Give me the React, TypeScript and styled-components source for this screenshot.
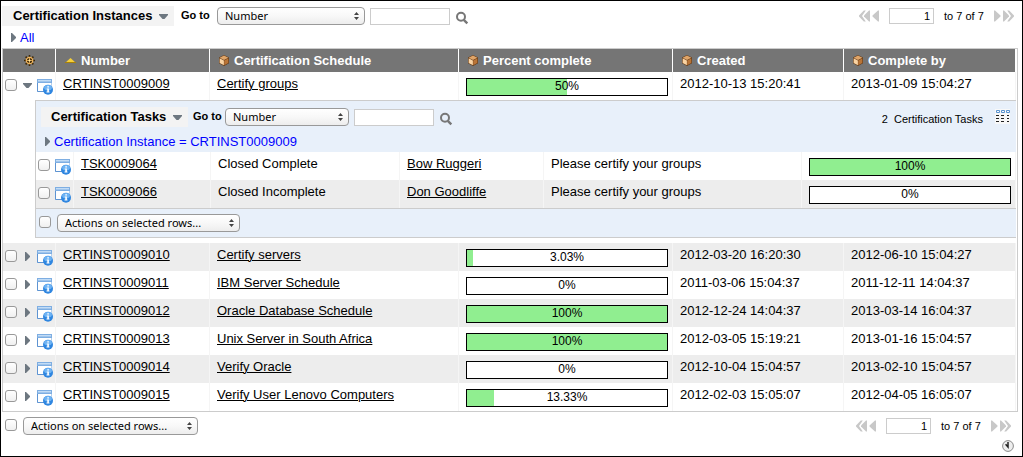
import React from "react";
import styled, { createGlobalStyle } from "styled-components";

const GlobalStyle = createGlobalStyle`
  * { box-sizing: border-box; }
  body { margin: 0; background: #fff; }
`;

const Frame = styled.main`
  min-height: 100vh;
  border: 1px solid #000;
  background: #fff;
  color: #000;
  font-family: "Liberation Sans", Arial, sans-serif;
  font-size: 13px;
  line-height: 15px;
  padding: 0 4px 0 1px;
`;

const Toolbar = styled.header<{ $nested?: boolean }>`
  display: flex;
  align-items: flex-start;
  padding: ${(p) => (p.$nested ? "6px 6px 0 5px" : "5px 4px 0 0")};

  > span {
    margin-top: 1px;
  }
`;

const Title = styled.h1<{ $nested?: boolean }>`
  display: flex;
  align-items: center;
  justify-content: space-between;
  width: ${(p) => (p.$nested ? 147 : 172)}px;
  height: 20px;
  margin: 0;
  padding: 0 6px 0 ${(p) => (p.$nested ? 10 : 11)}px;
  background: #f3f3f3;
  font-size: 13px;
  line-height: 20px;
  white-space: nowrap;
`;

const IconButton = styled.button`
  display: flex;
  flex: none;
  margin: 0;
  padding: 0;
  border: 0;
  background: none;
  cursor: pointer;
`;

const GoToLabel = styled.label<{ $nested?: boolean }>`
  width: 31px;
  margin: ${(p) => (p.$nested ? "1px 1px 0 5px" : "1px 5px 0 7px")};
  font-size: 11px;
  font-weight: bold;
  line-height: 16px;
  white-space: nowrap;
`;

const SelectWrap = styled.span<{ $width: number }>`
  position: relative;
  display: block;
  flex: none;
  width: ${(p) => p.$width}px;
  height: 18px;

  svg {
    position: absolute;
    top: 5px;
    right: 6px;
    pointer-events: none;
  }
`;

const NativeSelect = styled.select`
  appearance: none;
  display: block;
  width: 100%;
  height: 18px;
  margin: 0;
  padding: 0 16px 0 7px;
  border: 1px solid #999;
  border-radius: 4px;
  background: linear-gradient(#fff, #f8f8f8 50%, #ededed);
  color: #000;
  font: 11px/16px "Noto Sans", sans-serif;
`;

const TextInput = styled.input`
  width: 80px;
  height: 17px;
  margin: 2px 5px 0;
  padding: 0 3px;
  border: 1px solid #ccc;
  background: #fff;
  font: 11px/15px "Liberation Sans", Arial, sans-serif;
`;

const SearchButton = styled(IconButton)`
  margin-top: 5px;
`;

const ColumnsButton = styled(IconButton)`
  margin-top: 2px;
`;

const PagerBar = styled.div`
  display: flex;
  align-items: center;
  height: 18px;
  margin-top: 1px;
  margin-left: auto;
  font-size: 11px;
  white-space: nowrap;
`;

const PageInput = styled.input`
  width: 45px;
  height: 16px;
  margin: 0 10px;
  padding: 0 3px;
  border: 1px solid #ccc;
  background: #fff;
  color: #000;
  font: 11px/14px "Liberation Sans", Arial, sans-serif;
  text-align: right;
`;

const PageCount = styled.span`
  width: 42px;
  margin-right: 8px;
`;

const TaskCount = styled.span`
  display: flex;
  gap: 6px;
  margin: 3px 12px 0 auto;
  padding-top: 2px;
  font-size: 11px;
`;

const Breadcrumb = styled.nav<{ $nested?: boolean }>`
  display: flex;
  align-items: center;
  gap: 4px;
  height: ${(p) => (p.$nested ? 25 : 22)}px;
  padding: ${(p) => (p.$nested ? "3px 0 0 9px" : "0 0 0 9px")};

  a {
    color: #00f;
    text-decoration: none;
  }
`;

const TableFrame = styled.section`
  padding-right: 1px;
  border: 1px solid #ccc;
`;

const DataTable = styled.table`
  width: 100%;
  table-layout: fixed;
  border-collapse: separate;
  border-spacing: 0;
`;

const HeadCell = styled.th<{ $width?: number }>`
  width: ${(p) => (p.$width ? `${p.$width}px` : "auto")};
  height: 23px;
  padding: 0 0 0 9px;
  border-right: 1px solid #fff;
  background: #757575;
  color: #fff;
  text-align: left;
`;

const HeadContent = styled.span<{ $center?: boolean }>`
  display: flex;
  align-items: center;
  justify-content: ${(p) => (p.$center ? "center" : "flex-start")};
  gap: 5px;
  padding-right: ${(p) => (p.$center ? 9 : 0)}px;
  white-space: nowrap;
`;

const Row = styled.tr<{ $shaded: boolean }>`
  background: ${(p) => (p.$shaded ? "#ededed" : "#fff")};
`;

const Cell = styled.td<{ $width?: number }>`
  width: ${(p) => (p.$width ? `${p.$width}px` : "auto")};
  height: 28px;
  padding: 4px 0 0 7px;
  border-right: 1px solid #f5f5f5;
  vertical-align: top;
  white-space: nowrap;
`;

const BarCell = styled(Cell)`
  padding: 6px 4px 0 7px;
`;

const ControlCell = styled(Cell)`
  padding: 7px 0 0 2px;
`;

const Controls = styled.div`
  display: flex;
  align-items: flex-start;
`;

const Checkbox = styled.input`
  appearance: none;
  flex: none;
  width: 12px;
  height: 12px;
  margin: 0;
  border: 1px solid #999;
  border-radius: 3px;
  background: linear-gradient(#fff, #f0f0f0);
`;

const ExpandButton = styled(IconButton)`
  justify-content: center;
  width: 20px;
  height: 12px;
  align-items: center;
`;

const TaskIconButton = styled(IconButton)`
  margin-left: 5px;
`;

const RecordLink = styled.a`
  color: #000;
  text-decoration: underline;
  text-decoration-thickness: 1px;
  text-underline-offset: 1px;
`;

const Bar = styled.div`
  position: relative;
  height: 18px;
  border: 1px solid #000;
  background: #fff;
  font-size: 12px;
  line-height: 14px;
  text-align: center;
`;

const BarFill = styled.div`
  position: absolute;
  top: 0;
  bottom: 0;
  left: 0;
  background: #90ee90;
`;

const BarText = styled.span`
  position: relative;
`;

const NestedCell = styled.td`
  padding: 0 0 5px 32px;
`;

const NestedPanel = styled.section`
  border: 1px solid #ccc;
  border-right: 0;
  background: #e8f0fa;
`;

const Footer = styled.footer<{ $nested?: boolean }>`
  display: flex;
  align-items: flex-start;
  height: ${(p) => (p.$nested ? 29 : 28)}px;
  padding: ${(p) => (p.$nested ? "5px 0 0 3px" : "5px 7px 0 3px")};
  border-top: ${(p) => (p.$nested ? "1px solid #ccc" : "0")};
  gap: 6px;

  > input {
    margin-top: 2px;
  }

  > div {
    margin-top: 0;
  }
`;

const Status = styled.div`
  display: flex;
  justify-content: flex-end;
  padding: 0 4px 0 0;
`;

function Arrow({ down }: { down?: boolean }) {
  return down ? (
    <svg width="9" height="5" viewBox="0 0 9 5" aria-hidden="true">
      <path d="M0 0H9V1L5.5 5H3.5L0 1Z" fill="#6d7780" />
    </svg>
  ) : (
    <svg width="5" height="9" viewBox="0 0 5 9" aria-hidden="true">
      <path d="M0 0H1L5 4V5L1 9H0Z" fill="#6d7780" />
    </svg>
  );
}

function SearchIcon() {
  return (
    <svg width="14" height="14" viewBox="0 0 14 14" aria-hidden="true">
      <circle cx="6" cy="5.7" r="4" fill="none" stroke="#777" strokeWidth="2" />
      <path d="M8.8 8.8L12.3 12.3" stroke="#777" strokeWidth="2.4" />
    </svg>
  );
}

function StepperIcon() {
  return (
    <svg width="5" height="8" viewBox="0 0 5 8" aria-hidden="true">
      <path d="M2.5 0L5 3H0ZM0 5H5L2.5 8Z" fill="#444" />
    </svg>
  );
}

function PagerIcon({ forward }: { forward?: boolean }) {
  return (
    <svg width="20" height="12" viewBox="0 0 20 12" aria-hidden="true">
      <g transform={forward ? "translate(20 0) scale(-1 1)" : undefined} fill="#c8c8c8">
        <path d="M4.8 0.5H6.8L3 6L6.8 11.5H4.8L0 6.5V5.5Z" />
        <path d="M10 0.5H11V11.5H10L5 6.5V5.5Z" />
        <path d="M19 0.5H20V11.5H19L13.5 6.5V5.5Z" />
      </g>
    </svg>
  );
}

function CubeIcon() {
  return (
    <svg width="10" height="11" viewBox="0 0 10 11" aria-hidden="true">
      <path d="M5 0L10 2.5V8.3L5 11L0 8.3V2.5Z" fill="#5e3716" />
      <path d="M5 0.6L9.4 2.8L5 5L0.6 2.8Z" fill="#dfa569" />
      <path d="M0.6 3.2L4.9 5.4V10.3L0.6 8Z" fill="#fad3a2" />
      <path d="M9.4 3.2L5.2 5.4V10.3L9.4 8Z" fill="#b87437" />
    </svg>
  );
}

function SortIcon() {
  return (
    <svg width="11" height="5" viewBox="0 0 11 5" aria-hidden="true">
      <path d="M5.5 0L11 5H0Z" fill="#f5cf3a" />
      <path d="M0 4.5H11" stroke="#a98208" />
    </svg>
  );
}

function GearIcon() {
  return (
    <svg width="11" height="11" viewBox="0 0 11 11" aria-hidden="true">
      <path
        d="M5.5 0V11M0 5.5H11M1.6 1.6L9.4 9.4M9.4 1.6L1.6 9.4"
        stroke="#3c2604"
        strokeWidth="1.6"
      />
      <circle cx="5.5" cy="5.5" r="3.2" fill="#3c2604" stroke="#efb560" strokeWidth="1.2" />
      <path d="M5.5 2.5V8.5M2.5 5.5H8.5" stroke="#efb560" strokeWidth="0.8" />
      <circle cx="5.5" cy="5.5" r="1" fill="#fff0a8" />
    </svg>
  );
}

function FormIcon() {
  return (
    <svg width="16" height="16" viewBox="0 0 16 16" aria-hidden="true">
      <path d="M0.5 0.5H14.5V12.5H0.5Z" fill="#fff" stroke="#b5cfec" />
      <path d="M0 0H15V4H0Z" fill="#7eaee2" />
      <path d="M1 1H14V2.5H1Z" fill="#c2dcf6" />
      <path d="M0.5 4V12.5H7" fill="none" stroke="#5e94d2" />
      <circle cx="11" cy="10.7" r="5" fill="#2f86e0" />
      <ellipse cx="11" cy="8.8" rx="3.9" ry="2.7" fill="#6fb4f4" />
      <path d="M10.3 7.3H11.9V8.6H10.3ZM9.7 9.5H11.9V12.6H12.5V13.4H9.5V12.6H10.3V10.3H9.7Z" fill="#fff" />
    </svg>
  );
}

function ColumnsIcon() {
  return (
    <svg width="15" height="15" viewBox="0 0 15 15" aria-hidden="true">
      <rect width="15" height="15" fill="#f8f8f8" />
      <path d="M1.5 1.5H4.5V3.5H1.5ZM6.5 1.5H9.5V3.5H6.5ZM11.5 1.5H14.5V3.5H11.5Z" fill="#fff" stroke="#5a93cf" />
      <path
        d="M1 6.5H4M6 6.5H9M12 6.5H14M1 9.5H4M6 9.5H9M12 9.5H14M1 12.5H4M6 12.5H9M12 12.5H14"
        stroke="#222"
      />
    </svg>
  );
}

function ClockIcon() {
  return (
    <svg width="12" height="12" viewBox="0 0 12 12" aria-hidden="true">
      <circle cx="6" cy="6" r="5.4" fill="#eee" stroke="#8a8a8a" />
      <path d="M6 2V7L3.6 4.2" fill="none" stroke="#222" strokeWidth="1.5" />
    </svg>
  );
}

function Picker({ id, label, text, width }: { id: string; label?: string; text: string; width: number }) {
  return (
    <SelectWrap $width={width}>
      <NativeSelect id={id} aria-label={label}>
        <option>{text}</option>
      </NativeSelect>
      <StepperIcon />
    </SelectWrap>
  );
}

function ListToolbar({
  id,
  title,
  selectWidth,
  nested,
  children,
}: {
  id: string;
  title: string;
  selectWidth: number;
  nested?: boolean;
  children: React.ReactNode;
}) {
  return (
    <Toolbar $nested={nested}>
      <Title as={nested ? "h2" : "h1"} $nested={nested}>
        {title}
        <IconButton aria-label={`${title} menu`}>
          <Arrow down />
        </IconButton>
      </Title>
      <GoToLabel htmlFor={id} $nested={nested}>
        Go to
      </GoToLabel>
      <Picker id={id} text="Number" width={selectWidth} />
      <TextInput type="text" aria-label="Search text" />
      <SearchButton aria-label="Search">
        <SearchIcon />
      </SearchButton>
      {children}
    </Toolbar>
  );
}

function Pager() {
  return (
    <PagerBar>
      <IconButton aria-label="Previous pages">
        <PagerIcon />
      </IconButton>
      <PageInput type="text" defaultValue="1" aria-label="Row number" />
      <PageCount>to 7 of 7</PageCount>
      <IconButton aria-label="Next pages">
        <PagerIcon forward />
      </IconButton>
    </PagerBar>
  );
}

function Progress({ value }: { value: number }) {
  return (
    <Bar role="progressbar" aria-valuenow={value} aria-valuemin={0} aria-valuemax={100}>
      <BarFill style={{ width: `${value}%` }} />
      <BarText>{value}%</BarText>
    </Bar>
  );
}

const instances = [
  { number: "CRTINST0009009", schedule: "Certify groups", percent: 50, created: "2012-10-13 15:20:41", due: "2013-01-09 15:04:27" },
  { number: "CRTINST0009010", schedule: "Certify servers", percent: 3.03, created: "2012-03-20 16:20:30", due: "2012-06-10 15:04:27" },
  { number: "CRTINST0009011", schedule: "IBM Server Schedule", percent: 0, created: "2011-03-06 15:04:37", due: "2011-12-11 14:04:37" },
  { number: "CRTINST0009012", schedule: "Oracle Database Schedule", percent: 100, created: "2012-12-24 14:04:37", due: "2013-03-14 16:04:37" },
  { number: "CRTINST0009013", schedule: "Unix Server in South Africa", percent: 100, created: "2012-03-05 15:19:21", due: "2013-01-16 15:04:57" },
  { number: "CRTINST0009014", schedule: "Verify Oracle", percent: 0, created: "2012-10-04 15:04:57", due: "2013-02-10 15:04:57" },
  { number: "CRTINST0009015", schedule: "Verify User Lenovo Computers", percent: 13.33, created: "2012-02-03 15:05:07", due: "2012-04-05 16:05:07" },
];

const tasks = [
  { number: "TSK0009064", state: "Closed Complete", owner: "Bow Ruggeri", percent: 100 },
  { number: "TSK0009066", state: "Closed Incomplete", owner: "Don Goodliffe", percent: 0 },
];

const columns = [
  { label: "Certification Schedule", width: 249 },
  { label: "Percent complete", width: 214 },
  { label: "Created", width: 171 },
  { label: "Complete by" },
];

function TaskPanel() {
  return (
    <NestedPanel>
      <ListToolbar id="goto-task" title="Certification Tasks" selectWidth={124} nested>
        <TaskCount as="div">
          <span>2</span>
          <span>Certification Tasks</span>
        </TaskCount>
        <ColumnsButton aria-label="Choose columns">
          <ColumnsIcon />
        </ColumnsButton>
      </ListToolbar>
      <Breadcrumb $nested aria-label="Task filter">
        <Arrow />
        <a href="#filter">Certification Instance = CRTINST0009009</a>
      </Breadcrumb>
      <DataTable>
        <tbody>
          {tasks.map((task, i) => (
            <Row key={task.number} $shaded={i % 2 === 1}>
              <ControlCell $width={38}>
                <Controls>
                  <Checkbox type="checkbox" aria-label={`Select ${task.number}`} />
                  <TaskIconButton aria-label={`About ${task.number}`}>
                    <FormIcon />
                  </TaskIconButton>
                </Controls>
              </ControlCell>
              <Cell $width={137}>
                <RecordLink href={`#${task.number}`}>{task.number}</RecordLink>
              </Cell>
              <Cell $width={189}>{task.state}</Cell>
              <Cell $width={144}>
                <RecordLink href="#owner">{task.owner}</RecordLink>
              </Cell>
              <Cell>Please certify your groups</Cell>
              <BarCell $width={214}>
                <Progress value={task.percent} />
              </BarCell>
            </Row>
          ))}
        </tbody>
      </DataTable>
      <Footer $nested>
        <Checkbox type="checkbox" aria-label="Select all tasks" />
        <Picker id="task-actions" label="Task actions" text="Actions on selected rows..." width={183} />
      </Footer>
    </NestedPanel>
  );
}

export default function App() {
  return (
    <>
      <GlobalStyle />
      <Frame>
        <ListToolbar id="goto-instance" title="Certification Instances" selectWidth={148}>
          <Pager />
        </ListToolbar>
        <Breadcrumb aria-label="Instance filter">
          <Arrow />
          <a href="#all">All</a>
        </Breadcrumb>
        <TableFrame>
          <DataTable>
            <thead>
              <tr>
                <HeadCell $width={53}>
                  <HeadContent $center>
                    <IconButton aria-label="Personalize list">
                      <GearIcon />
                    </IconButton>
                  </HeadContent>
                </HeadCell>
                <HeadCell $width={154}>
                  <HeadContent>
                    <SortIcon />
                    Number
                  </HeadContent>
                </HeadCell>
                {columns.map((column) => (
                  <HeadCell key={column.label} $width={column.width}>
                    <HeadContent>
                      <CubeIcon />
                      {column.label}
                    </HeadContent>
                  </HeadCell>
                ))}
              </tr>
            </thead>
            <tbody>
              {instances.map((item, i) => (
                <React.Fragment key={item.number}>
                  <Row $shaded={i % 2 === 1}>
                    <ControlCell>
                      <Controls>
                        <Checkbox type="checkbox" aria-label={`Select ${item.number}`} />
                        <ExpandButton aria-label={`Toggle ${item.number}`} aria-expanded={i === 0}>
                          <Arrow down={i === 0} />
                        </ExpandButton>
                        <IconButton aria-label={`About ${item.number}`}>
                          <FormIcon />
                        </IconButton>
                      </Controls>
                    </ControlCell>
                    <Cell>
                      <RecordLink href={`#${item.number}`}>{item.number}</RecordLink>
                    </Cell>
                    <Cell>
                      <RecordLink href="#schedule">{item.schedule}</RecordLink>
                    </Cell>
                    <BarCell>
                      <Progress value={item.percent} />
                    </BarCell>
                    <Cell>{item.created}</Cell>
                    <Cell>{item.due}</Cell>
                  </Row>
                  {i === 0 && (
                    <tr>
                      <NestedCell colSpan={6}>
                        <TaskPanel />
                      </NestedCell>
                    </tr>
                  )}
                </React.Fragment>
              ))}
            </tbody>
          </DataTable>
        </TableFrame>
        <Footer>
          <Checkbox type="checkbox" aria-label="Select all instances" />
          <Picker id="instance-actions" label="Instance actions" text="Actions on selected rows..." width={175} />
          <Pager />
        </Footer>
        <Status>
          <IconButton aria-label="Response time">
            <ClockIcon />
          </IconButton>
        </Status>
      </Frame>
    </>
  );
}
